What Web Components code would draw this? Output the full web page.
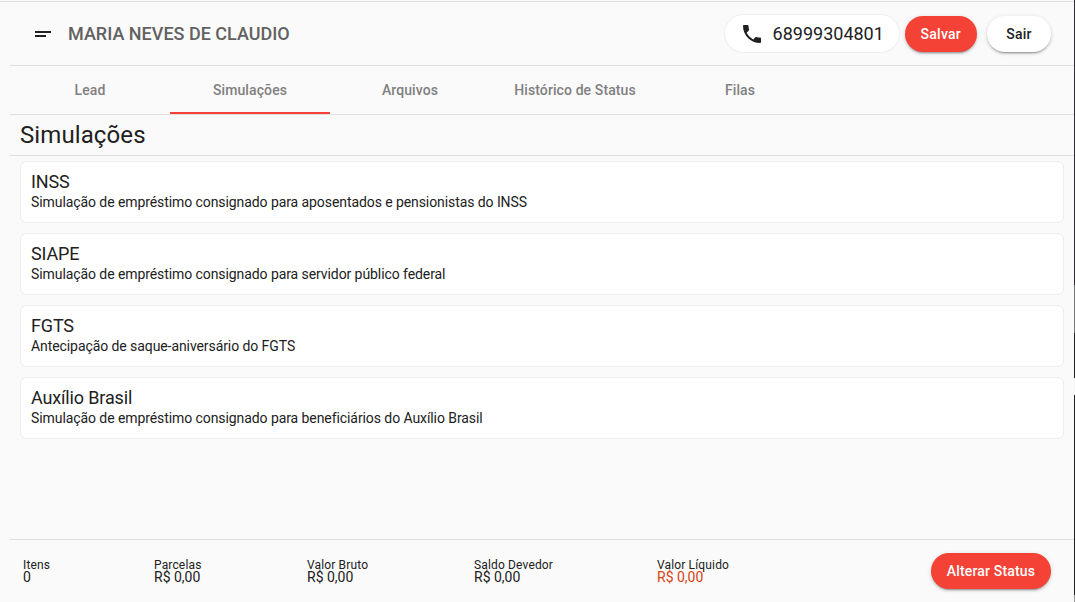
<!DOCTYPE html>
<html lang="pt-BR">
<head>
<meta charset="utf-8">
<title>Lead</title>
<style>
    html, body { margin: 0; height: 100%; }
    body { background: #fafafa; font-family: Roboto, sans-serif; color: #212121; overflow: hidden; }
</style>
</head>
<body>
<lead-page></lead-page>
<script>
class PillButton extends HTMLElement{
    constructor(){
        super();
        this.attachShadow({mode : 'open'});
        this.shadowRoot.innerHTML = `
        <style>
        :host { display: inline-flex; }
        button {
            min-width: 64px;
            height: 36px;
            border: 0;
            border-radius: 18px;
            padding: 0 16px;
            font: 500 14px Roboto, sans-serif;
            letter-spacing: var(--btn-spacing, .25px);
            background: #fff;
            color: #212121;
            box-shadow: 0 3px 1px -2px rgba(0,0,0,.2), 0 2px 2px 0 rgba(0,0,0,.14), 0 1px 5px 0 rgba(0,0,0,.12);
        }
        :host([primary]) button { background: #f44336; color: #fff; }
        </style>
        <button><slot></slot></button>
        `;
    }
}

class LeadHeader extends HTMLElement{
    constructor(){
        super();
        this.attachShadow({mode : 'open'});
        this.shadowRoot.innerHTML = `
        <style>
        :host {
            display: flex;
            align-items: center;
            height: 63px;
            padding: 0 23px 0 25px;
            border-bottom: 1px solid #e0e0e0;
        }
        svg.menu { width: 18px; height: 8px; margin-right: 15px; }
        .name { flex: 1; font-size: 18px; font-weight: 500; color: #616161; }
        .phone {
            display: flex;
            align-items: center;
            box-sizing: border-box;
            width: 176px;
            height: 39px;
            padding-left: 15px;
            margin-right: 5px;
            background: #fff;
            border: 1px solid #eee;
            border-radius: 20px;
            font-size: 18px;
            font-weight: 400;
        }
        .phone svg { width: 24px; height: 24px; margin-right: 9px; }
        .actions { display: flex; gap: 10px; }
        </style>
        <svg class="menu" viewBox="0 0 18 8"><path d="M0 1h16v2H0zM0 5h11v2H0z" fill="#212121"/></svg>
        <div class="name"><slot name="name"></slot></div>
        <div class="phone">
            <svg viewBox="0 0 24 24"><path fill="#212121" d="M6.62 10.79c1.44 2.83 3.76 5.14 6.59 6.59l2.2-2.2c.27-.27.67-.36 1.02-.24 1.12.37 2.33.57 3.57.57.55 0 1 .45 1 1V20c0 .55-.45 1-1 1-9.39 0-17-7.61-17-17 0-.55.45-1 1-1h3.5c.55 0 1 .45 1 1 0 1.25.2 2.45.57 3.57.11.35.03.74-.25 1.02l-2.2 2.2z"/></svg>
            <slot name="phone"></slot>
        </div>
        <div class="actions"><slot name="actions"></slot></div>
        `;
    }
}

class TabBar extends HTMLElement{
    constructor(){
        super();
        this.attachShadow({mode : 'open'});
        this.shadowRoot.innerHTML = `
        <style>
        :host {
            display: flex;
            height: 48px;
            border-bottom: 1px solid #e0e0e0;
        }
        </style>
        <slot></slot>
        `;
    }
}

class TabItem extends HTMLElement{
    constructor(){
        super();
        this.attachShadow({mode : 'open'});
        this.shadowRoot.innerHTML = `
        <style>
        :host {
            display: flex;
            align-items: center;
            justify-content: center;
            box-sizing: border-box;
            width: 160px;
            height: 48px;
            font-size: 14px;
            font-weight: 500;
            letter-spacing: .1px;
            color: #808080;
        }
        :host([wide]) { width: 170px; }
        :host([active]) { border-bottom: 2px solid #f44336; padding-top: 2px; }
        </style>
        <slot></slot>
        `;
    }
}

class SimCard extends HTMLElement{
    constructor(){
        super();
        this.attachShadow({mode : 'open'});
        this.shadowRoot.innerHTML = `
        <style>
        :host {
            display: block;
            box-sizing: border-box;
            height: 62px;
            padding: 10px 10px 0;
            background: #fff;
            border: 1px solid #eee;
            border-radius: 6px;
            color: #212121;
        }
        .title { font-size: 18px; line-height: 20px; letter-spacing: -.15px; }
        .text { font-size: 14px; line-height: 20px; letter-spacing: -.08px; }
        </style>
        <div class="title"><slot name="title"></slot></div>
        <div class="text"><slot name="text"></slot></div>
        `;
    }
}

class FooterValue extends HTMLElement{
    constructor(){
        super();
        this.attachShadow({mode : 'open'});
        this.shadowRoot.innerHTML = `
        <style>
        :host { display: block; font-size: 12px; line-height: 12px; letter-spacing: .15px; color: #212121; }
        .value { font-size: 14px; letter-spacing: 0; }
        :host([accent]) .value { color: #d84315; }
        </style>
        <div>${this.getAttribute('label')}</div>
        <div class="value">${this.getAttribute('value')}</div>
        `;
    }
}

class LeadPage extends HTMLElement{
    constructor(){
        super();
        this.attachShadow({mode : 'open'});
        this.shadowRoot.innerHTML = `
        <style>
        :host {
            display: flex;
            height: 602px;
            background: #fafafa;
        }
        .main {
            flex: 1;
            min-width: 0;
            display: flex;
            flex-direction: column;
            padding: 2px 0 0 10px;
        }
        .top {
            flex: none;
            height: 1px;
            margin: -1px 0 0 -10px;
            background: #e0e0e0;
        }
        .edge {
            flex: none;
            width: 1px;
            background: linear-gradient(#2f2a33 0 285px, #777 285px 333px, #222 333px 378px, #f5f5f5 378px 395px, #222 395px 595px, #999 595px);
        }
        h2 {
            margin: 0;
            padding-left: 10px;
            height: 41px;
            box-sizing: border-box;
            font-size: 24px;
            font-weight: 400;
            line-height: 41px;
            letter-spacing: .1px;
            border-bottom: 1px solid #e0e0e0;
            color: #212121;
        }
        .cards {
            flex: 1;
            display: flex;
            flex-direction: column;
            gap: 10px;
            padding: 5px 10px 0;
        }
        footer {
            display: flex;
            align-items: center;
            height: 62px;
            padding: 0 23px 0 13px;
            border-top: 1px solid #e0e0e0;
        }
        footer-value:nth-child(1) { width: 131px; }
        footer-value:nth-child(2) { width: 153px; }
        footer-value:nth-child(3) { width: 167px; }
        footer-value:nth-child(4) { width: 183px; }
        footer-value:nth-child(5) { flex: 1; }
        footer pill-button { --btn-spacing: .15px; }
        </style>
        <div class="main">
            <div class="top"></div>
            <lead-header>
                <span slot="name">MARIA NEVES DE CLAUDIO</span>
                <span slot="phone">68999304801</span>
                <pill-button slot="actions" primary>Salvar</pill-button>
                <pill-button slot="actions">Sair</pill-button>
            </lead-header>
            <tab-bar>
                <tab-item>Lead</tab-item>
                <tab-item active>Simulações</tab-item>
                <tab-item>Arquivos</tab-item>
                <tab-item wide>Histórico de Status</tab-item>
                <tab-item>Filas</tab-item>
            </tab-bar>
            <h2>Simulações</h2>
            <div class="cards">
                <sim-card><span slot="title">INSS</span><span slot="text">Simulação de empréstimo consignado para aposentados e pensionistas do INSS</span></sim-card>
                <sim-card><span slot="title">SIAPE</span><span slot="text">Simulação de empréstimo consignado para servidor público federal</span></sim-card>
                <sim-card><span slot="title">FGTS</span><span slot="text">Antecipação de saque-aniversário do FGTS</span></sim-card>
                <sim-card><span slot="title">Auxílio Brasil</span><span slot="text">Simulação de empréstimo consignado para beneficiários do Auxílio Brasil</span></sim-card>
            </div>
            <footer>
                <footer-value label="Itens" value="0"></footer-value>
                <footer-value label="Parcelas" value="R$ 0,00"></footer-value>
                <footer-value label="Valor Bruto" value="R$ 0,00"></footer-value>
                <footer-value label="Saldo Devedor" value="R$ 0,00"></footer-value>
                <footer-value label="Valor Líquido" value="R$ 0,00" accent></footer-value>
                <pill-button primary>Alterar Status</pill-button>
            </footer>
        </div>
        <div class="edge"></div>
        `;
    }
}

customElements.define('pill-button', PillButton);
customElements.define('lead-header', LeadHeader);
customElements.define('tab-bar', TabBar);
customElements.define('tab-item', TabItem);
customElements.define('sim-card', SimCard);
customElements.define('footer-value', FooterValue);
customElements.define('lead-page', LeadPage);
</script>
</body>
</html>
